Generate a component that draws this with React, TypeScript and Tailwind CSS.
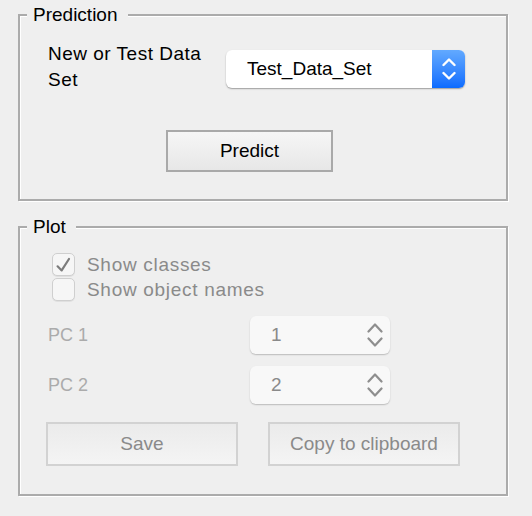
const font = { fontFamily: '"Liberation Sans", Arial, sans-serif' };

// ── Small drawings ────────────────────────────────────────────────────────────

const UpDown = ({ color, width }: { color: string; width: number }) => (
  <svg width="14" height="24" viewBox="0 0 14 24" fill="none" stroke={color} strokeWidth={width} strokeLinecap="round" strokeLinejoin="round">
    <path d="M1.5 8 L7 2.5 L12.5 8" />
    <path d="M1.5 16 L7 21.5 L12.5 16" />
  </svg>
);

const SpinArrows = () => (
  <svg width="16" height="26" viewBox="0 0 16 26" fill="none" stroke="#8e8e8e" strokeWidth={2.2} strokeLinecap="round" strokeLinejoin="round">
    <path d="M1.5 9.5 L8 2.5 L14.5 9.5" />
    <path d="M1.5 16.5 L8 23.5 L14.5 16.5" />
  </svg>
);

function Check({ checked, label }: { checked?: boolean; label: string }) {
  return (
    <div className="flex h-[25px] items-center">
      <div className="ml-[4px] flex h-[23px] w-[23px] items-center justify-center rounded-[5px] border border-[#cfcfcf] bg-[#f6f6f6] shadow-[0_1px_0_rgba(0,0,0,0.06)]">
        {checked && (
          <svg width="23" height="23" viewBox="0 0 23 23" fill="none" stroke="#7c7c7c" strokeWidth={2.4} strokeLinecap="round" strokeLinejoin="round">
            <path d="M5 13.5 L9.5 18 L17.5 5.5" />
          </svg>
        )}
      </div>
      <span className="ml-[12px] text-[19px] leading-[25px] tracking-[0.7px] text-[#8a8a8a]">{label}</span>
    </div>
  );
}

function Spinner({ label, value }: { label: string; value: string }) {
  return (
    <div className="flex items-center">
      <span className="w-[202px] text-[18px] leading-[22px] text-[#ababab]">{label}</span>
      <div className="flex h-[38px] w-[140px] items-center justify-between rounded-[6px] bg-[#f8f8f8] pl-[21px] pr-[7px] shadow-[0_1px_1.5px_rgba(0,0,0,0.22)]">
        <span className="text-[19px] text-[#8a8a8a]">{value}</span>
        <SpinArrows />
      </div>
    </div>
  );
}

const frame =
  'ml-[18px] w-[490px] min-w-0 border-2 border-[#ababab] shadow-[inset_1px_1px_0_#fff,1px_1px_0_#fff] pl-[28px] pr-0';
const legend = '-ml-[21px] bg-[#efefef] pl-[6px] pr-[10px] text-[19px] leading-[22px] text-black';

export default function App() {
  return (
    <div className="h-[516px] w-[532px] overflow-hidden bg-[#efefef] pt-[4px]" style={font}>
      {/* Prediction */}
      <fieldset className={`${frame} pb-[27px] pt-0`}>
        <legend className={legend}>Prediction</legend>
        <div className="flex items-start">
          <div className="mt-[15px] w-[165px] text-[19px] leading-[26px] tracking-[0.5px] text-black">New or Test Data Set</div>
          <div className="ml-[13px] mt-[24px] flex h-[38px] w-[239px] overflow-hidden rounded-[6px] bg-white shadow-[0_1px_1.5px_rgba(0,0,0,0.35)]">
            <div className="flex flex-1 items-center pl-[21px] text-[19px] text-black">Test_Data_Set</div>
            <div className="flex w-[33px] items-center justify-center bg-gradient-to-b from-[#62a9ff] to-[#0a6bff]">
              <UpDown color="#fff" width={2.4} />
            </div>
          </div>
        </div>
        <button className="ml-[118px] mt-[37px] h-[42px] w-[167px] border-2 border-[#a9a9a9] bg-gradient-to-b from-[#f6f6f6] to-[#e7e7e7] text-[19px] text-black">
          Predict
        </button>
      </fieldset>

      {/* Plot */}
      <fieldset className={`${frame} mt-[15px] pb-[28px] pt-0`}>
        <legend className={legend}>Plot</legend>
        <div className="mt-[14px]">
          <Check checked label="Show classes" />
          <Check label="Show object names" />
        </div>
        <div className="mt-[14px] flex flex-col gap-[12px]">
          <Spinner label="PC 1" value="1" />
          <Spinner label="PC 2" value="2" />
        </div>
        <div className="-ml-[2px] mt-[18px] flex gap-[30px]">
          <button className="h-[44px] w-[192px] border-2 border-[#d2d2d2] bg-gradient-to-b from-[#ebebeb] to-[#f4f4f4] text-[19px] text-[#8a8a8a]">
            Save
          </button>
          <button className="h-[44px] w-[192px] border-2 border-[#d2d2d2] bg-gradient-to-b from-[#ebebeb] to-[#f4f4f4] text-[19px] text-[#8a8a8a]">
            Copy to clipboard
          </button>
        </div>
      </fieldset>
    </div>
  );
}
